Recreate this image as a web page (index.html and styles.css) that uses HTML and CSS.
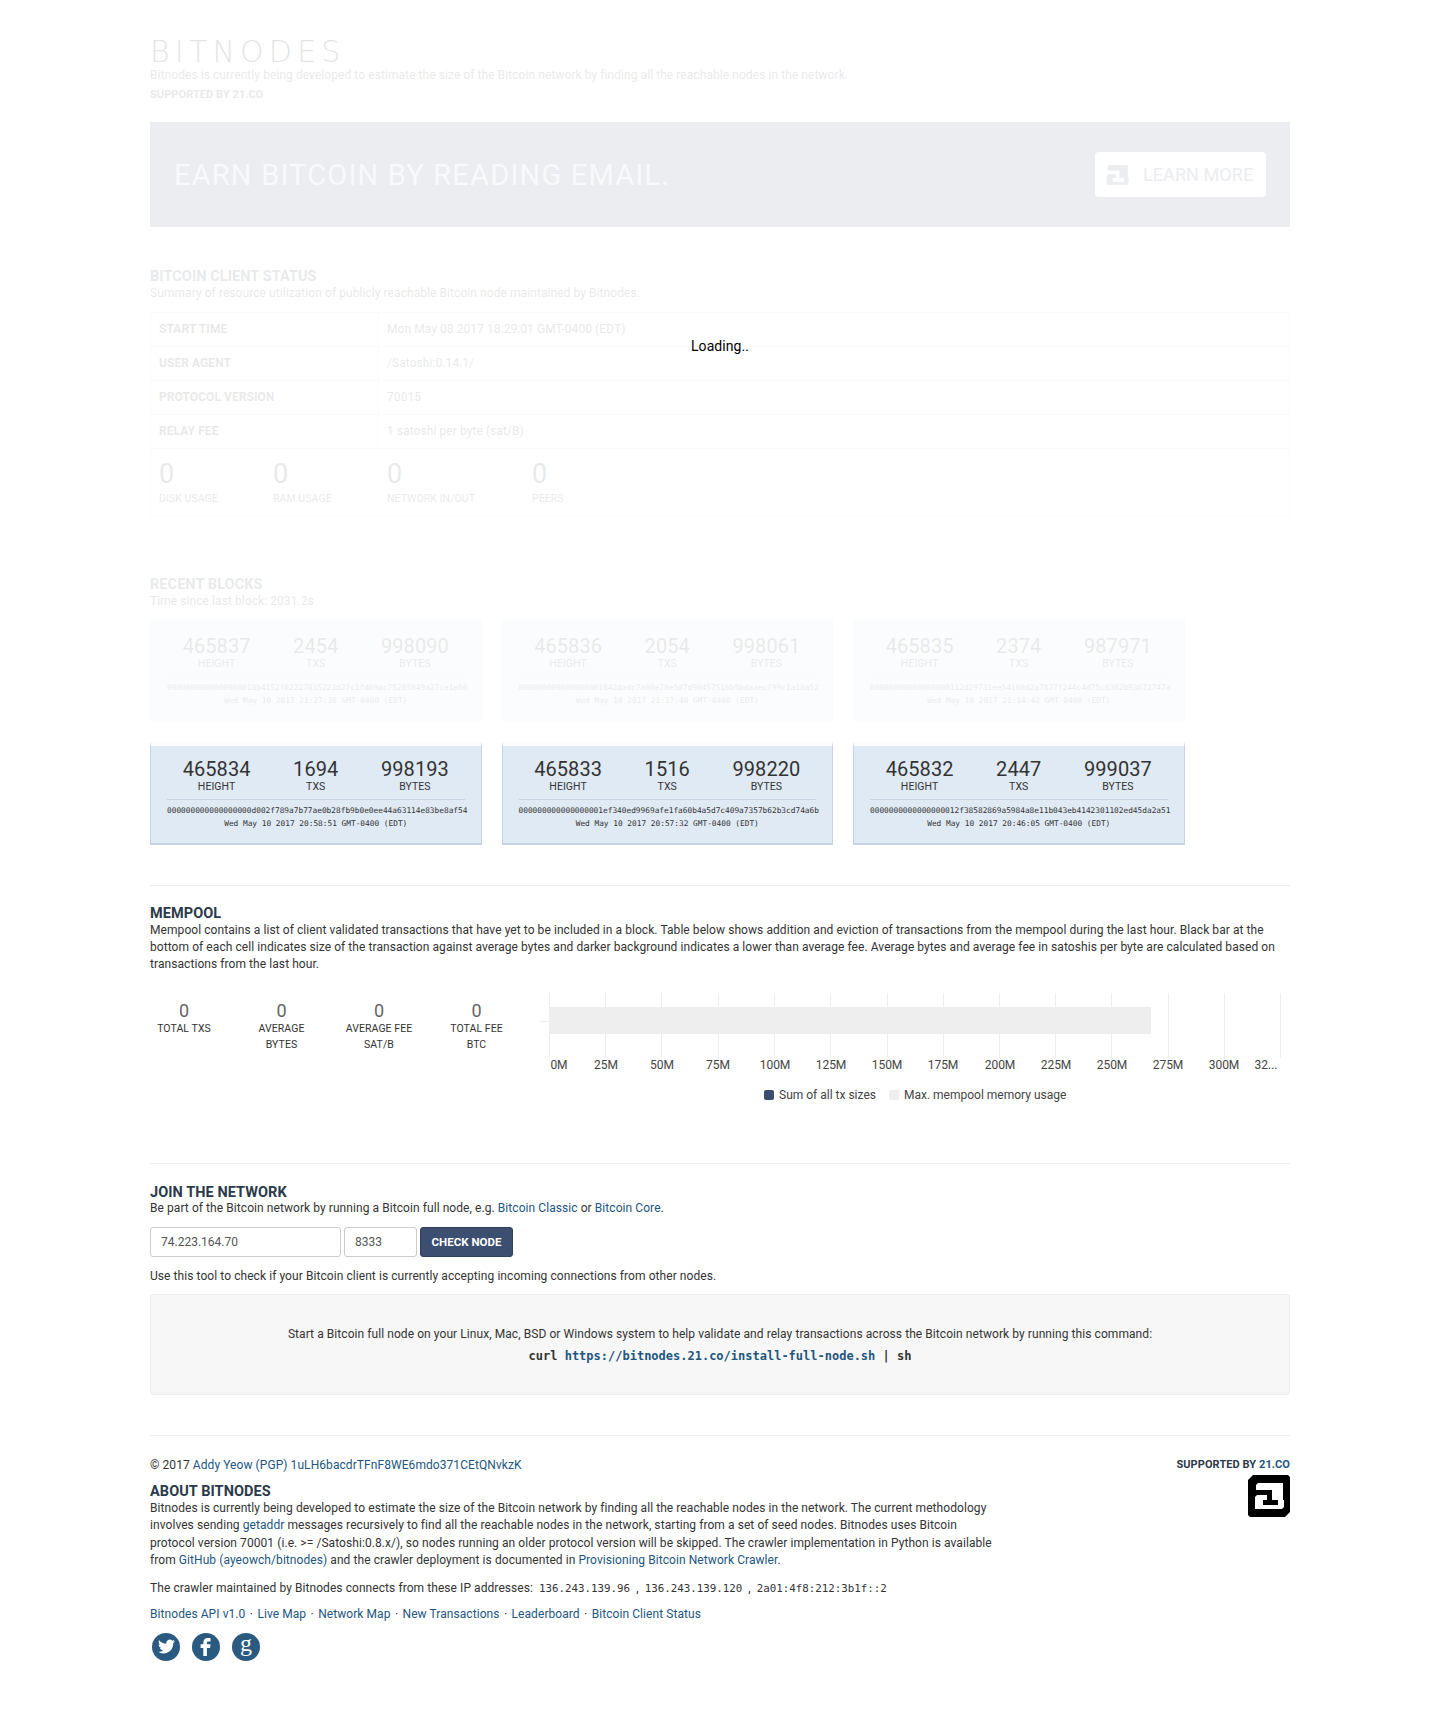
FILE: index.html
```html
<!DOCTYPE html>
<html lang="en">
<head>
    <meta charset="UTF-8">
    <meta name="viewport" content="width=device-width, initial-scale=1.0">
    <title>Bitnodes</title>
    <link rel="stylesheet" href="styles.css">
</head>
<body>
<div class="container">
    <header class="faded header">
        <div class="logo">BITNODES</div>
        <p class="tagline">Bitnodes is currently being developed to estimate the size of the Bitcoin network by finding all the reachable nodes in the network.</p>
        <p class="supported-top">SUPPORTED BY 21.CO</p>
    </header>

    <div class="hero">
        <div class="hero-text">EARN BITCOIN BY READING EMAIL.</div>
        <a class="learn-btn" href="#">
            <svg class="logo21-mini" viewBox="6 7 32 28">
                <path d="M10 8H35V25H36V32L34 34H7V22L9 20H19V15H8V10Z" fill="#ebedf1"/>
                <path d="M19 15H24V25H30V30H15V25H19Z" fill="#fff"/>
            </svg>
            <span>LEARN MORE</span>
        </a>
    </div>

    <section class="status">
        <div class="loading">Loading..</div>
        <div class="faded">
            <h2>BITCOIN CLIENT STATUS</h2>
            <p class="sub">Summary of resource utilization of publicly reachable Bitcoin node maintained by Bitnodes.</p>
            <div class="status-table">
                <div class="status-row"><div class="status-key">START TIME</div><div class="status-val">Mon May 08 2017 18:29:01 GMT-0400 (EDT)</div></div>
                <div class="status-row"><div class="status-key">USER AGENT</div><div class="status-val">/Satoshi:0.14.1/</div></div>
                <div class="status-row"><div class="status-key">PROTOCOL VERSION</div><div class="status-val">70015</div></div>
                <div class="status-row"><div class="status-key">RELAY FEE</div><div class="status-val">1 satoshi per byte (sat/B)</div></div>
                <div class="status-stats">
                    <div class="stat s1"><b>0</b><span>DISK USAGE</span></div>
                    <div class="stat s2"><b>0</b><span>RAM USAGE</span></div>
                    <div class="stat s3"><b>0</b><span>NETWORK IN/OUT</span></div>
                    <div class="stat"><b>0</b><span>PEERS</span></div>
                </div>
            </div>
        </div>
    </section>

    <section class="recent">
        <div class="faded">
            <h2>RECENT BLOCKS</h2>
            <p class="sub">Time since last block: 2031.2s</p>
        </div>
        <div class="blocks">
            <div class="block faded-block">
                <div class="block-nums">
                    <div><b>465837</b><span>HEIGHT</span></div>
                    <div><b>2454</b><span>TXS</span></div>
                    <div><b>998090</b><span>BYTES</span></div>
                </div>
                <div class="block-hash">0000000000000000018b4152f02227035223d27c1fd69ac75265849a27ce1e80</div>
                <div class="block-time">Wed May 10 2017 21:27:38 GMT-0400 (EDT)</div>
            </div>
            <div class="block faded-block">
                <div class="block-nums">
                    <div><b>465836</b><span>HEIGHT</span></div>
                    <div><b>2054</b><span>TXS</span></div>
                    <div><b>998061</b><span>BYTES</span></div>
                </div>
                <div class="block-hash">000000000000000001842dadc7a00e78e5d7d90457516b5bdaaecf99c1a18a52</div>
                <div class="block-time">Wed May 10 2017 21:17:40 GMT-0400 (EDT)</div>
            </div>
            <div class="block faded-block">
                <div class="block-nums">
                    <div><b>465835</b><span>HEIGHT</span></div>
                    <div><b>2374</b><span>TXS</span></div>
                    <div><b>987971</b><span>BYTES</span></div>
                </div>
                <div class="block-hash">00000000000000000112d29731ee54160d2a7837f244c4d75c8382b93672747a</div>
                <div class="block-time">Wed May 10 2017 21:14:42 GMT-0400 (EDT)</div>
            </div>
            <div class="block">
                <div class="block-nums">
                    <div><b>465834</b><span>HEIGHT</span></div>
                    <div><b>1694</b><span>TXS</span></div>
                    <div><b>998193</b><span>BYTES</span></div>
                </div>
                <div class="block-hash">000000000000000000d002f789a7b77ae0b28fb9b0e0ee44a63114e83be8af54</div>
                <div class="block-time">Wed May 10 2017 20:58:51 GMT-0400 (EDT)</div>
            </div>
            <div class="block">
                <div class="block-nums">
                    <div><b>465833</b><span>HEIGHT</span></div>
                    <div><b>1516</b><span>TXS</span></div>
                    <div><b>998220</b><span>BYTES</span></div>
                </div>
                <div class="block-hash">000000000000000001ef340ed9969afe1fa60b4a5d7c409a7357b62b3cd74a6b</div>
                <div class="block-time">Wed May 10 2017 20:57:32 GMT-0400 (EDT)</div>
            </div>
            <div class="block">
                <div class="block-nums">
                    <div><b>465832</b><span>HEIGHT</span></div>
                    <div><b>2447</b><span>TXS</span></div>
                    <div><b>999037</b><span>BYTES</span></div>
                </div>
                <div class="block-hash">0000000000000000012f38582869a5984a8e11b043eb4142301102ed45da2a51</div>
                <div class="block-time">Wed May 10 2017 20:46:05 GMT-0400 (EDT)</div>
            </div>
        </div>
    </section>

    <section class="mempool">
        <h2>MEMPOOL</h2>
        <p>Mempool contains a list of client validated transactions that have yet to be included in a block. Table below shows addition and eviction of transactions from the mempool during the last hour. Black bar at the<br>bottom of each cell indicates size of the transaction against average bytes and darker background indicates a lower than average fee. Average bytes and average fee in satoshis per byte are calculated based on<br>transactions from the last hour.</p>
        <div class="mem-row">
            <div class="mem-stats">
                <div class="mem-stat"><b>0</b><span>TOTAL TXS</span></div>
                <div class="mem-stat"><b>0</b><span>AVERAGE<br>BYTES</span></div>
                <div class="mem-stat"><b>0</b><span>AVERAGE FEE<br>SAT/B</span></div>
                <div class="mem-stat"><b>0</b><span>TOTAL FEE<br>BTC</span></div>
            </div>
            <svg class="mem-chart" width="760" height="120" viewBox="530 990 760 120">
                <g stroke="#eee" stroke-width="1">
                    <path d="M549.5 993V1058M605.5 993V1058M661.5 993V1058M718.5 993V1058M774.5 993V1058M830.5 993V1058M887.5 993V1058M943.5 993V1058M999.5 993V1058M1055.5 993V1058M1111.5 993V1058M1168.5 993V1058M1224.5 993V1058M1280.5 993V1058M540 1021.5H549"/>
                </g>
                <rect x="549" y="1007" width="602" height="27" fill="#eee"/>
                <g class="axis" text-anchor="middle">
                    <text x="559" y="1069">0M</text>
                    <text x="606" y="1069">25M</text>
                    <text x="662" y="1069">50M</text>
                    <text x="718" y="1069">75M</text>
                    <text x="775" y="1069">100M</text>
                    <text x="831" y="1069">125M</text>
                    <text x="887" y="1069">150M</text>
                    <text x="943" y="1069">175M</text>
                    <text x="1000" y="1069">200M</text>
                    <text x="1056" y="1069">225M</text>
                    <text x="1112" y="1069">250M</text>
                    <text x="1168" y="1069">275M</text>
                    <text x="1224" y="1069">300M</text>
                    <text x="1266" y="1069">32...</text>
                </g>
                <rect x="764" y="1090" width="10" height="10" rx="2" fill="#3b4d6e"/>
                <text class="axis" x="779" y="1099">Sum of all tx sizes</text>
                <rect x="889" y="1090" width="10" height="10" rx="2" fill="#eee"/>
                <text class="axis" x="904" y="1099">Max. mempool memory usage</text>
            </svg>
        </div>
    </section>

    <section class="join">
        <h2>JOIN THE NETWORK</h2>
        <p>Be part of the Bitcoin network by running a Bitcoin full node, e.g. <a href="#">Bitcoin Classic</a> or <a href="#">Bitcoin Core</a>.</p>
        <form class="check-form">
            <input class="input-ip" type="text" value="74.223.164.70">
            <input class="input-port" type="text" value="8333">
            <button class="check-btn" type="button">CHECK NODE</button>
        </form>
        <p>Use this tool to check if your Bitcoin client is currently accepting incoming connections from other nodes.</p>
        <div class="well">
            <p>Start a Bitcoin full node on your Linux, Mac, BSD or Windows system to help validate and relay transactions across the Bitcoin network by running this command:</p>
            <code>curl <a href="#">https://bitnodes.21.co/install-full-node.sh</a> | sh</code>
        </div>
    </section>

    <footer class="footer">
        <div class="footer-top">
            <div class="footer-main">
                <p><span>© 2017 <a href="#">Addy Yeow</a> <a href="#">(PGP)</a> <a href="#">1uLH6bacdrTFnF8WE6mdo371CEtQNvkzK</a></span></p>
                <h2>ABOUT BITNODES</h2>
                <p class="about">Bitnodes is currently being developed to estimate the size of the Bitcoin network by finding all the reachable nodes in the network. The current methodology<br>involves sending <a href="#">getaddr</a> messages recursively to find all the reachable nodes in the network, starting from a set of seed nodes. Bitnodes uses Bitcoin<br>protocol version 70001 (i.e. &gt;= /Satoshi:0.8.x/), so nodes running an older protocol version will be skipped. The crawler implementation in Python is available<br>from <a href="#">GitHub (ayeowch/bitnodes)</a> and the crawler deployment is documented in <a href="#">Provisioning Bitcoin Network Crawler</a>.</p>
            </div>
            <div class="footer-side">
                <div class="supported"><span>SUPPORTED BY</span> <a href="#">21.CO</a></div>
                <svg class="logo21" viewBox="0 0 42 42">
                    <path d="M5 0H40L42 2V37L37 42H2L0 40V5Z" fill="#000"/>
                    <path d="M10 8H35V25H36V32L34 34H7V22L9 20H19V15H8V10Z" fill="#fff"/>
                    <path d="M19 15H24V25H30V30H15V25H19Z" fill="#000"/>
                </svg>
            </div>
        </div>
        <p class="ips">The crawler maintained by Bitnodes connects from these IP addresses: <code>136.243.139.96</code> , <code>136.243.139.120</code> , <code>2a01:4f8:212:3b1f::2</code></p>
        <p class="links"><a href="#">Bitnodes API v1.0</a><span class="dot">·</span><a href="#">Live Map</a><span class="dot">·</span><a href="#">Network Map</a><span class="dot">·</span><a href="#">New Transactions</a><span class="dot">·</span><a href="#">Leaderboard</a><span class="dot">·</span><a href="#">Bitcoin Client Status</a></p>
        <div class="social">
            <a class="social-btn" href="#"><svg viewBox="0 0 24 24" width="17" height="17"><path fill="#fff" d="M23.953 4.57a10 10 0 01-2.825.775 4.958 4.958 0 002.163-2.723c-.951.555-2.005.959-3.127 1.184a4.92 4.92 0 00-8.384 4.482C7.69 8.095 4.067 6.13 1.64 3.162a4.822 4.822 0 00-.666 2.475c0 1.71.87 3.213 2.188 4.096a4.904 4.904 0 01-2.228-.616v.06a4.923 4.923 0 003.946 4.827 4.996 4.996 0 01-2.212.085 4.936 4.936 0 004.604 3.417 9.867 9.867 0 01-6.102 2.105c-.39 0-.779-.023-1.17-.067a13.995 13.995 0 007.557 2.209c9.053 0 13.998-7.496 13.998-13.985 0-.21 0-.42-.015-.63A9.935 9.935 0 0024 4.59z"/></svg></a>
            <a class="social-btn" href="#"><svg viewBox="2 3 20 22" width="18" height="20"><path fill="#fff" d="M14 8h3V4h-3c-3 0-5 2-5 5v2H6v4h3v9h4v-9h3.5l.5-4h-4V9c0-.6.4-1 1-1z"/></svg></a>
            <a class="social-btn social-g" href="#">g</a>
        </div>
    </footer>
</div>
</body>
</html>
```

FILE: styles.css
```css
* {
    box-sizing: border-box;
}

body {
    margin: 0;
    height: 1714px;
    background: #fff;
    color: #333;
    font-family: Roboto, "Liberation Sans", sans-serif;
    font-size: 12px;
    line-height: 17px;
    letter-spacing: .07px;
}

a {
    color: #22567e;
    text-decoration: none;
}

p {
    margin: 0;
}

h2 {
    margin: 0;
    font-size: 14.5px;
    line-height: 17px;
    font-weight: 700;
    color: #2b3a4a;
}

.container {
    width: 1140px;
    margin: 0 auto;
    padding-top: 37px;
}

.faded {
    opacity: .1;
}

.logo {
    font-family: "DejaVu Sans", sans-serif;
    font-weight: 200;
    font-size: 30px;
    line-height: 30px;
    letter-spacing: 5.2px;
    color: #000;
}

.supported-top {
    margin-top: 2px;
    font-size: 11px;
    font-weight: 700;
}

.hero {
    margin-top: 19px;
    height: 105px;
    background: #ebedf1;
    padding: 30px 24px 0 24px;
    display: flex;
    justify-content: space-between;
}

.hero-text {
    margin-top: 5px;
    font-size: 29px;
    line-height: 36px;
    letter-spacing: 1.2px;
    color: #f8f9fa;
}

.learn-btn {
    width: 171px;
    height: 45px;
    background: #fff;
    border-radius: 4px;
    padding: 11px 0 0 11px;
    display: flex;
    gap: 13px;
    font-size: 18px;
    line-height: 24px;
    color: #ebedf1;
    white-space: nowrap;
}

.logo21-mini {
    width: 24px;
    height: 24px;
}

.status {
    position: relative;
    margin-top: 41px;
}

.loading {
    position: absolute;
    left: 541px;
    top: 70px;
    color: #000;
    font-size: 14px;
}

.status-table {
    margin-top: 10px;
    border: 1px solid #ddd;
}

.status-row {
    display: flex;
    height: 34px;
    border-bottom: 1px solid #ddd;
    align-items: center;
}

.status-key {
    width: 228px;
    height: 100%;
    padding-left: 8px;
    line-height: 33px;
    font-weight: 700;
    border-right: 1px solid #ddd;
}

.status-val {
    padding-left: 8px;
}

.status-stats {
    display: flex;
    height: 67px;
    padding: 9px 8px;
}

.stat {
    display: flex;
    flex-direction: column;
    width: 114px;
    font-size: 10.5px;
}

.stat.s3 {
    width: 145px;
}

.stat b {
    font-size: 27px;
    line-height: 32px;
    font-weight: 400;
}

.recent {
    margin-top: 59px;
}

.blocks {
    margin-top: 9px;
    display: grid;
    grid-template-columns: repeat(3, 331.5px);
    grid-template-rows: 103px 103px;
    column-gap: 20px;
    row-gap: 20px;
}

.block {
    background: #e0eaf5;
    background-clip: padding-box;
    border: 1px solid #c5d3e3;
    border-top: 4px solid #fbfcfe;
    border-bottom-width: 2px;
    padding: 12px 16px 0;
    text-align: center;
}

.faded-block {
    opacity: .1;
    border-color: #e0eaf5;
    padding-top: 15px;
    border-top-width: 1px;
    height: 103px;
}

.block-nums {
    display: grid;
    grid-template-columns: 1fr 1fr 1fr;
    padding-bottom: 5px;
    border-bottom: 1px solid #c5d3e3;
    margin-bottom: 4px;
}

.block-nums b {
    display: block;
    font-size: 20px;
    line-height: 22px;
    font-weight: 400;
}

.block-nums span {
    display: block;
    font-size: 10.5px;
    line-height: 14px;
}

.block-hash,
.block-time {
    font-family: "DejaVu Sans Mono", monospace;
    font-size: 7.8px;
    line-height: 13px;
    letter-spacing: 0;
    white-space: nowrap;
}

.mempool {
    margin-top: 40px;
    padding-top: 19px;
    border-top: 1px solid #eee;
}

.mem-row {
    margin-top: 17px;
    display: flex;
    height: 120px;
}

.mem-stats {
    display: flex;
    gap: 29.5px;
    width: 380px;
    padding-top: 10px;
}

.mem-stat {
    width: 68px;
    flex: none;
    text-align: center;
    font-size: 10.5px;
    line-height: 16px;
}

.mem-stat b {
    display: block;
    font-size: 18px;
    line-height: 21px;
    font-weight: 400;
    color: #666;
}

.mem-stat span {
    display: block;
    white-space: nowrap;
}

.mem-chart {
    display: block;
}

.axis {
    font-size: 12px;
    letter-spacing: 0;
    fill: #444;
}

.join {
    margin-top: 53px;
    padding-top: 21px;
    border-top: 1px solid #eee;
}

.join h2 {
    line-height: 15px;
}

.check-form {
    margin: 10px 0 11px;
    display: flex;
    gap: 3px;
    height: 30px;
}

.check-form input {
    height: 30px;
    border: 1px solid #ccc;
    border-radius: 3px;
    padding: 0 10px;
    color: #555;
    font: 12px Roboto, sans-serif;
}

.input-ip {
    width: 191px;
}

.input-port {
    width: 73px;
}

.check-btn {
    width: 93px;
    height: 30px;
    background: #3c4f70;
    color: #fff;
    border: 1px solid #2f3f5c;
    border-radius: 3px;
    padding: 0;
    font: 700 11.5px Roboto, sans-serif;
}

.well {
    margin-top: 9px;
    height: 101px;
    padding: 31px 0 0;
    background: #f7f7f7;
    border: 1px solid #eee;
    border-radius: 3px;
    text-align: center;
}

.well code {
    display: block;
    margin-top: 5px;
    font-family: "DejaVu Sans Mono", monospace;
    font-size: 12px;
    font-weight: 700;
    letter-spacing: 0;
}

.footer {
    margin-top: 40px;
    padding-top: 21px;
    border-top: 1px solid #eee;
}

.footer-top {
    display: flex;
    justify-content: space-between;
}

.footer-main h2 {
    margin-top: 9px;
}

.about {
    line-height: 17.4px;
}

.footer-side {
    margin-top: -1px;
    display: flex;
    flex-direction: column;
    align-items: flex-end;
}

.supported {
    font-size: 11px;
    font-weight: 700;
    color: #2b3a4a;
}

.logo21 {
    width: 42px;
    height: 42px;
    margin-top: 2px;
}

.ips {
    margin-top: 10px;
}

.ips code {
    margin: 0 3px;
    font-family: "DejaVu Sans Mono", monospace;
    font-size: 10.8px;
    letter-spacing: 0;
}

.links {
    margin-top: 9px;
}

.dot {
    margin: 0 4.4px;
}

.social {
    margin-top: 10px;
    margin-left: 2px;
    display: flex;
    gap: 12px;
}

.social-btn {
    width: 28px;
    height: 28px;
    border-radius: 50%;
    background: #2a5a80;
    display: flex;
    align-items: center;
    justify-content: center;
}

.social-g {
    color: #fff;
    font-family: "Liberation Serif", serif;
    font-size: 24px;
    padding-bottom: 7px;
}
```
